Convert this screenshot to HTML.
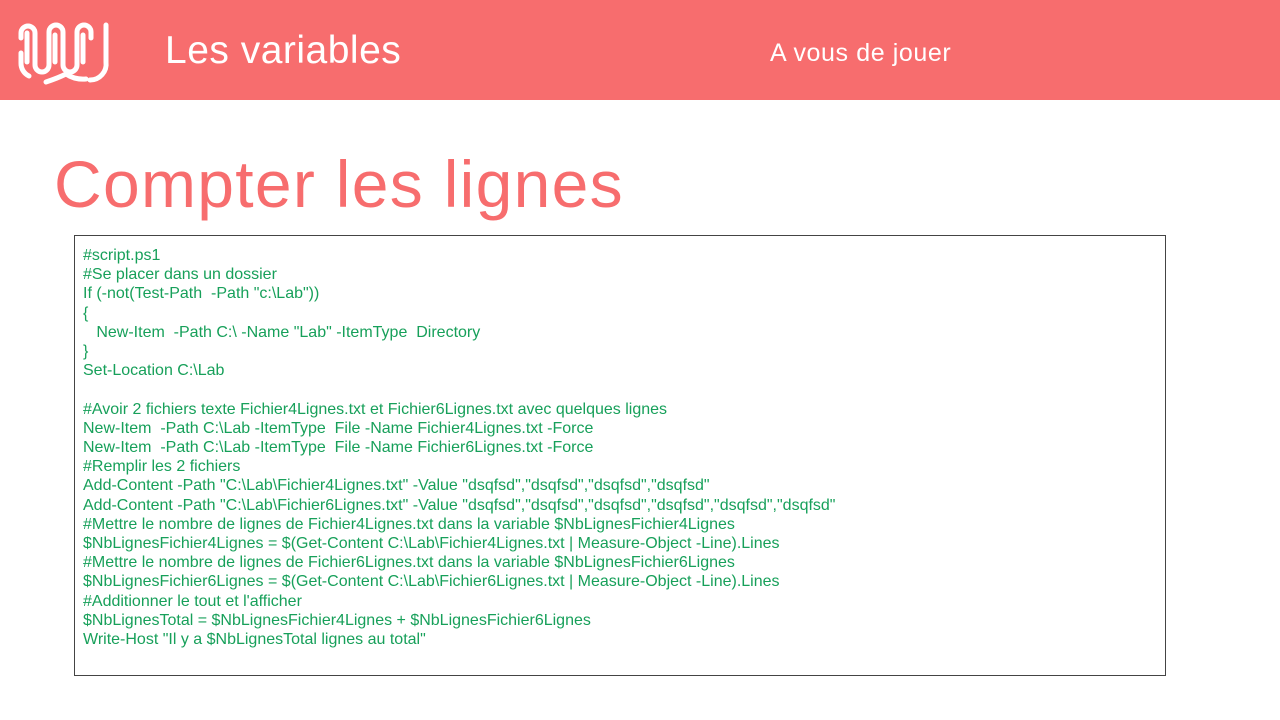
<!DOCTYPE html>
<html><head><meta charset="utf-8"><style>
body{margin:0;width:1280px;height:720px;background:#fff;position:relative;overflow:hidden;font-family:"Liberation Sans",sans-serif}
.hdr{position:absolute;left:0;top:0;width:1280px;height:100px;background:#f76d6e}
.t1{position:absolute;left:165px;top:29px;font-size:39px;color:#fff;letter-spacing:0.5px}
.t2{position:absolute;left:770px;top:39px;font-size:25px;color:#fff;letter-spacing:0.6px}
.h1{position:absolute;left:54px;top:146px;font-size:66px;color:#f76d6e;letter-spacing:1.3px}
.box{position:absolute;left:74px;top:235px;width:1090px;height:439px;border:1px solid #444}
pre{position:absolute;left:83px;top:246px;margin:0;font-family:"Liberation Sans",sans-serif;font-size:16px;line-height:19.2px;color:#17a05a;letter-spacing:0;white-space:pre}
</style></head><body>
<div class="hdr">
<svg style="position:absolute;left:0;top:0" width="130" height="100" viewBox="0 0 130 100" fill="none" stroke="#fff" stroke-width="5" stroke-linecap="round">
<path d="M21 38 V33 A7 7 0 0 1 35 33 V65 A7 7 0 0 0 49 65 V32 A7 7 0 0 1 63 32 V65 A7 7 0 0 0 77 65 V32 A7 7 0 0 1 91 32 V38"/>
<path d="M21 53 V63 A14 14 0 0 0 29 76"/>
<path d="M27 33 V62"/>
<path d="M55 35 V62"/>
<path d="M83 35 V62"/>
<path d="M106 25 V62 A16 16 0 0 1 90 80"/>
<path d="M46 82 Q58 78 66 74 Q75 80 86 79"/>
</svg>
<div class="t1">Les variables</div>
<div class="t2">A vous de jouer</div>
</div>
<div class="h1">Compter les lignes</div>
<div class="box"></div>
<pre>#script.ps1
#Se placer dans un dossier
If (-not(Test-Path  -Path "c:\Lab"))
{
   New-Item  -Path C:\ -Name "Lab" -ItemType  Directory
}
Set-Location C:\Lab

#Avoir 2 fichiers texte Fichier4Lignes.txt et Fichier6Lignes.txt avec quelques lignes
New-Item  -Path C:\Lab -ItemType  File -Name Fichier4Lignes.txt -Force
New-Item  -Path C:\Lab -ItemType  File -Name Fichier6Lignes.txt -Force
#Remplir les 2 fichiers
Add-Content -Path "C:\Lab\Fichier4Lignes.txt" -Value "dsqfsd","dsqfsd","dsqfsd","dsqfsd"
Add-Content -Path "C:\Lab\Fichier6Lignes.txt" -Value "dsqfsd","dsqfsd","dsqfsd","dsqfsd","dsqfsd","dsqfsd"
#Mettre le nombre de lignes de Fichier4Lignes.txt dans la variable $NbLignesFichier4Lignes
$NbLignesFichier4Lignes = $(Get-Content C:\Lab\Fichier4Lignes.txt | Measure-Object -Line).Lines
#Mettre le nombre de lignes de Fichier6Lignes.txt dans la variable $NbLignesFichier6Lignes
$NbLignesFichier6Lignes = $(Get-Content C:\Lab\Fichier6Lignes.txt | Measure-Object -Line).Lines
#Additionner le tout et l'afficher
$NbLignesTotal = $NbLignesFichier4Lignes + $NbLignesFichier6Lignes
Write-Host "Il y a $NbLignesTotal lignes au total"</pre>
</body></html>
